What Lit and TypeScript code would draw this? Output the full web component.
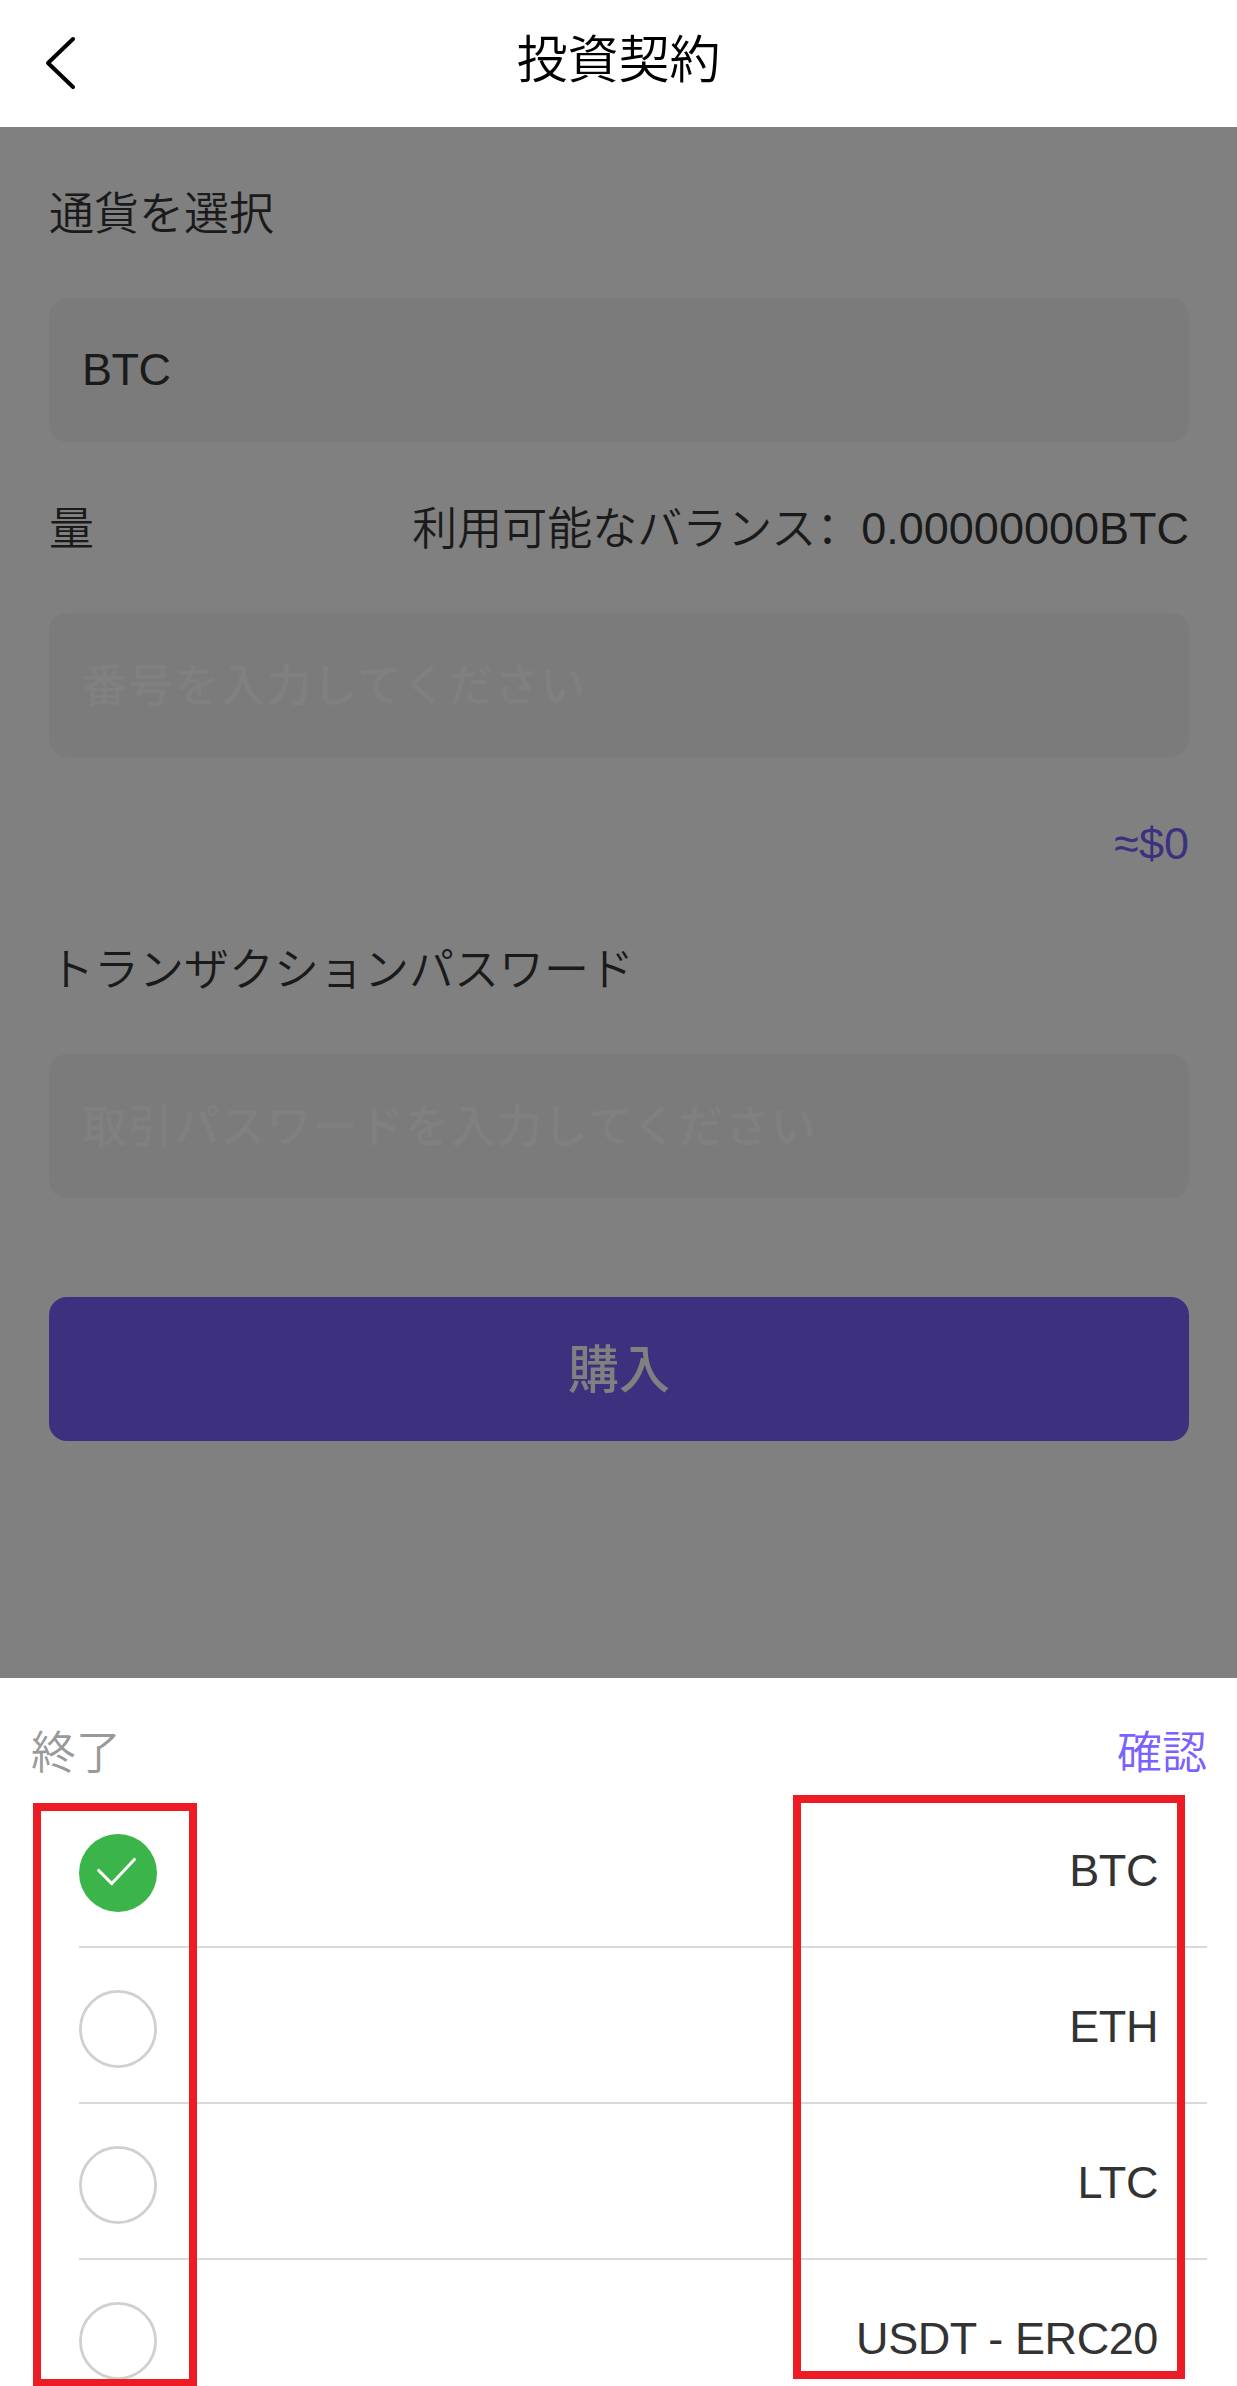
import { LitElement, html, css } from "lit";
import { customElement, property, state } from "lit/decorators.js";

@customElement("currency-option")
class CurrencyOption extends LitElement {
  @property() name = "";
  @property({ type: Boolean }) checked = false;

  static styles = css`
    :host {
      display: block;
      padding-left: 79px;
      padding-right: 30px;
    }
    .row {
      box-sizing: border-box;
      height: 156px;
      padding: 8px 49px 0 0;
      display: flex;
      align-items: flex-start;
      justify-content: space-between;
      border-bottom: 2px solid #d8d8dd;
    }
    .mark {
      display: block;
      width: 78px;
      height: 78px;
      margin-top: 34px;
    }
    .name {
      line-height: 64px;
      margin-top: 39px;
      letter-spacing: -0.4px;
    }
  `;

  render() {
    return html`<div class="row">
      <svg class="mark" viewBox="0 0 78 78" fill="none">
        ${this.checked
          ? html`<svg viewBox="0 0 78 78" fill="none">
              <circle cx="39" cy="39" r="39" fill="#3bb54a" />
              <path d="M19.6 36.4 32.8 49.6 55.4 25.4" stroke="#fff" stroke-width="3" stroke-linecap="round" stroke-linejoin="round" />
            </svg>`
          : html`<svg viewBox="0 0 78 78" fill="none">
              <circle cx="39" cy="39" r="37.6" stroke="#d0d0d0" stroke-width="2.8" />
            </svg>`}
      </svg>
      <span class="name">${this.name}</span>
    </div>`;
  }
}

@customElement("app-root")
class AppRoot extends LitElement {
  @state() selected = "BTC";
  private currencies = ["BTC", "ETH", "LTC", "USDT - ERC20"];

  static styles = css`
    :host {
      display: block;
      font-family: "Liberation Sans", "Noto Sans CJK JP", sans-serif;
      font-size: 45px;
      font-weight: 350;
      line-height: 64px;
      color: #1a1a1a;
    }
    .page {
      position: relative;
      box-sizing: border-box;
      height: 2386px;
      overflow: hidden;
      display: flex;
      flex-direction: column;
      background: #808080;
    }
    .header {
      flex: none;
      height: 127px;
      display: grid;
      grid-template-columns: 120px 1fr 120px;
      align-items: center;
      background: #fff;
      color: #000;
    }
    .back {
      display: block;
      margin-left: 43px;
      margin-top: -2px;
      width: 34px;
      height: 56px;
    }
    .title {
      text-align: center;
      font-size: 51px;
      margin-top: -6px;
    }
    .form {
      flex: none;
      box-sizing: border-box;
      height: 1551px;
      padding: 55px 48px 0 49px;
      display: flex;
      flex-direction: column;
    }
    .line {
      display: flex;
      justify-content: space-between;
      height: 64px;
      white-space: nowrap;
    }
    .ja {
      line-height: 1;
      vertical-align: -1px;
    }
    .colon {
      line-height: 1;
      font-family: "Noto Sans CJK SC", sans-serif;
    }
    .field {
      box-sizing: border-box;
      height: 144px;
      margin: 52px 0 54px;
      padding-left: 33px;
      display: flex;
      align-items: center;
      border-radius: 18px;
      background: #7b7b7b;
    }
    .value {
      letter-spacing: -0.5px;
    }
    .line.balance-line {
      padding-top: 1px;
    }
    .hint {
      padding-top: 3px;
      color: #808080;
      font-weight: 500;
      letter-spacing: 1.1px;
    }
    .approx {
      height: 64px;
      padding-top: 1px;
      text-align: right;
      color: #3d317f;
      margin-bottom: 62px;
    }
    .buy {
      box-sizing: border-box;
      height: 144px;
      padding-top: 4px;
      margin-top: 45px;
      display: flex;
      align-items: center;
      justify-content: center;
      border-radius: 18px;
      background: #3d317f;
      color: #808080;
      font-size: 51px;
      font-weight: 500;
    }
    .sheet {
      flex: 1;
      background: #fff;
      color: #333;
    }
    .actions {
      box-sizing: border-box;
      height: 114px;
      padding: 44px 30px 0 31px;
      display: flex;
      justify-content: space-between;
    }
    .cancel {
      color: #999;
    }
    .confirm {
      color: #7b61ff;
    }
    .frame {
      position: absolute;
      box-sizing: border-box;
      height: 584px;
      border: 8px solid #ed1c24;
    }
    .frame-left {
      left: 33px;
      top: 1803px;
      width: 164px;
    }
    .frame-right {
      left: 793px;
      top: 1795px;
      width: 392px;
    }
  `;

  render() {
    return html`<div class="page">
      <div class="header">
        <svg class="back" viewBox="0 0 34 56" fill="none" stroke="#000" stroke-width="4" stroke-linecap="round" stroke-linejoin="round">
          <path d="M30 4 5 28 30 52" />
        </svg>
        <div class="title">投資契約</div>
      </div>
      <div class="form">
        <div class="line"><div><span class="ja">通貨を選択</span></div></div>
        <div class="field"><span class="value">BTC</span></div>
        <div class="line balance-line">
          <div><span class="ja">量</span></div>
          <div><span class="ja">利用可能なバランス</span><span class="colon" lang="zh-CN">：</span>0.00000000BTC</div>
        </div>
        <div class="field"><span class="hint">番号を入力してください</span></div>
        <div class="approx">≈$0</div>
        <div class="line"><div><span class="ja">トランザクションパスワード</span></div></div>
        <div class="field"><span class="hint">取引パスワードを入力してください</span></div>
        <div class="buy">購入</div>
      </div>
      <div class="sheet">
        <div class="actions">
          <span class="cancel">終了</span>
          <span class="confirm">確認</span>
        </div>
        ${this.currencies.map(
          (c) => html`<currency-option
            .name=${c}
            .checked=${c === this.selected}
            @click=${() => (this.selected = c)}
          ></currency-option>`
        )}
      </div>
      <div class="frame frame-left"></div>
      <div class="frame frame-right"></div>
    </div>`;
  }
}
